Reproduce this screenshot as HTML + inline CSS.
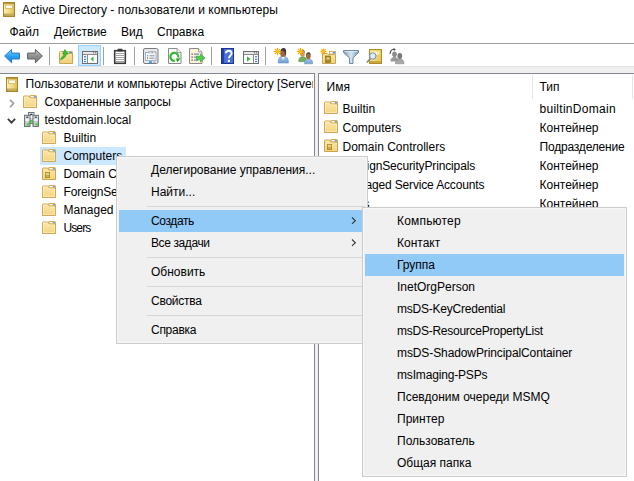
<!DOCTYPE html>
<html><head><meta charset="utf-8">
<style>
html,body{margin:0;padding:0;}
body{width:634px;height:481px;overflow:hidden;position:relative;background:#fff;font-family:"Liberation Sans",sans-serif;font-size:12px;color:#000;}
.a{position:absolute;}
.t{position:absolute;white-space:nowrap;line-height:13px;}
.vs{position:absolute;width:1px;height:18px;top:47px;background:#a0a0a0;}
svg{position:absolute;overflow:visible;}
</style></head><body>
<!-- title bar -->
<svg style="left:3px;top:2px" width="12" height="15" viewBox="0 0 12 15">
<defs><linearGradient id="bk" x1="0" x2="1"><stop offset="0" stop-color="#fdf2b8"/><stop offset="0.6" stop-color="#f0d77a"/><stop offset="1" stop-color="#ddb850"/></linearGradient></defs>
<rect x="0.5" y="0.5" width="11" height="14" fill="url(#bk)" stroke="#a8842a"/>
<rect x="1" y="1" width="10" height="1.2" fill="#c49a38"/>
<rect x="2.5" y="3" width="7" height="3.5" fill="#fffde8" stroke="#d4b460" stroke-width="0.8"/>
<rect x="1" y="11.6" width="10" height="2.6" fill="#b89c48"/><rect x="2" y="12.2" width="8" height="1.2" fill="#cdb868"/>
</svg>
<div class="t" style="left:22px;top:4px;font-size:12px;letter-spacing:0.06px">Active Directory - пользователи и компьютеры</div>
<!-- menu bar -->
<div class="t" style="left:9.5px;top:26px">Файл</div>
<div class="t" style="left:54px;top:26px">Действие</div>
<div class="t" style="left:121px;top:26px">Вид</div>
<div class="t" style="left:157px;top:26px">Справка</div>
<div class="a" style="left:0;top:43px;width:634px;height:1px;background:#a0a0a0"></div>
<!-- toolbar -->
<svg style="left:0;top:0" width="0" height="0"><defs>
<linearGradient id="gblue" x1="0" y1="0" x2="0" y2="1"><stop offset="0" stop-color="#8fd3ff"/><stop offset="0.5" stop-color="#2ba3f0"/><stop offset="1" stop-color="#1a7fd6"/></linearGradient>
<linearGradient id="ggray" x1="0" y1="0" x2="0" y2="1"><stop offset="0" stop-color="#c8c8c8"/><stop offset="0.5" stop-color="#909090"/><stop offset="1" stop-color="#7a7a7a"/></linearGradient>
<linearGradient id="gfold" x1="0" y1="0" x2="0" y2="1"><stop offset="0" stop-color="#fbe6a6"/><stop offset="1" stop-color="#f1cf7c"/></linearGradient>
<linearGradient id="gsteel" x1="0" y1="0" x2="1" y2="0"><stop offset="0" stop-color="#7b98b0"/><stop offset="0.5" stop-color="#d8e6f0"/><stop offset="1" stop-color="#7b98b0"/></linearGradient>
<linearGradient id="ggold" x1="0" y1="0" x2="1" y2="0"><stop offset="0" stop-color="#f6e49a"/><stop offset="1" stop-color="#e6c55c"/></linearGradient>
</defs></svg>
<!-- back -->
<svg style="left:4px;top:48px" width="16" height="16" viewBox="0 0 16 16"><path d="M0.6 8 L7.6 1.4 L7.6 5.1 L15.4 5.1 L15.4 11 L7.6 11 L7.6 14.8 Z" fill="url(#gblue)" stroke="#2a78c8" stroke-width="1" stroke-linejoin="round"/></svg>
<!-- fwd -->
<svg style="left:27px;top:48px" width="16" height="16" viewBox="0 0 16 16"><path d="M15.4 8 L8.4 1.4 L8.4 5.1 L0.6 5.1 L0.6 11 L8.4 11 L8.4 14.8 Z" fill="url(#ggray)" stroke="#5e5e5e" stroke-width="1" stroke-linejoin="round"/></svg>
<div class="vs" style="left:49px"></div>
<!-- folder up -->
<svg style="left:58px;top:48px" width="16" height="16" viewBox="0 0 16 16">
<path d="M1.5 4.5 Q1.5 3.5 2.5 3.5 H6 L7 5 H14.5 V15.5 H1.5 Z" fill="url(#gfold)" stroke="#c9a558"/>
<path d="M8.5 3.5 H14 Q14.5 3.5 14.5 4 V5.5 H9.5 Z" fill="#f6dc96" stroke="#c9a558" stroke-width="0.8"/><rect x="11.2" y="3.8" width="2.6" height="1.3" fill="#3b8ee8"/>
<path d="M2.5 11.8 C3.5 9 5.5 8.2 6.3 6 L4.6 6 L7 1.6 L10 6 L8.3 6 C7.8 8.8 5.8 10.5 2.5 11.8 Z" fill="#3dc43d" stroke="#1f9a1f" stroke-width="0.7" stroke-linejoin="round"/>
</svg>
<!-- show tree (checked) -->
<div class="a" style="left:78px;top:45px;width:21px;height:19px;background:#cce8ff;border:1px solid #99d1ff"></div>
<svg style="left:82px;top:48px" width="16" height="16" viewBox="0 0 16 16">
<rect x="0.5" y="3.5" width="15" height="12" fill="#fff" stroke="#6e6e6e"/>
<rect x="1" y="4" width="14" height="2" fill="#e8e8e8"/><line x1="1" y1="6.5" x2="15" y2="6.5" stroke="#8a8a8a"/>
<rect x="11" y="4.2" width="1.2" height="1.2" fill="#6e6e6e"/><rect x="13" y="4.2" width="1.2" height="1.2" fill="#6e6e6e"/>
<line x1="5.5" y1="7" x2="5.5" y2="15" stroke="#8a8a8a"/>
<rect x="2" y="8.2" width="2.2" height="1.2" fill="#3b7fd0"/><rect x="2" y="10.7" width="2.2" height="1.2" fill="#3b7fd0"/><rect x="2" y="13" width="2.2" height="1.2" fill="#3b7fd0"/>
<path d="M8.5 11 L11.5 8.5 V13.5 Z" fill="#3cb83c"/>
</svg>
<div class="vs" style="left:103px"></div>
<!-- clipboard -->
<svg style="left:112px;top:48px" width="16" height="16" viewBox="0 0 16 16">
<rect x="2.7" y="2.7" width="10.6" height="12.6" fill="#fff" stroke="#3a3a3a" stroke-width="1.6"/>
<rect x="5.5" y="0.8" width="5" height="2.6" rx="0.6" fill="#3a3a3a"/>
<line x1="4" y1="5.5" x2="12" y2="5.5" stroke="#a8a8a8"/><line x1="4" y1="7.5" x2="12" y2="7.5" stroke="#a8a8a8"/><line x1="4" y1="9.5" x2="12" y2="9.5" stroke="#a8a8a8"/><line x1="4" y1="11.5" x2="12" y2="11.5" stroke="#a8a8a8"/><line x1="4" y1="13.5" x2="12" y2="13.5" stroke="#a8a8a8"/>
</svg>
<div class="vs" style="left:134px"></div>
<!-- properties -->
<svg style="left:143px;top:48px" width="16" height="16" viewBox="0 0 16 16">
<rect x="0.5" y="0.5" width="14.5" height="15" rx="1.5" fill="#e6e8ec" stroke="#7a7a80"/>
<rect x="2.5" y="4.5" width="10.5" height="8" fill="#f6f8fb" stroke="#9aa0aa" stroke-width="0.8"/>
<rect x="6" y="3.5" width="3" height="1.5" fill="#f6f8fb" stroke="#9aa0aa" stroke-width="0.6"/><rect x="9.5" y="3.5" width="3" height="1.5" fill="#f6f8fb" stroke="#9aa0aa" stroke-width="0.6"/>
<rect x="4" y="7.2" width="1.2" height="1.2" fill="#2a9cf0"/><rect x="6.5" y="7.3" width="5" height="1" fill="#8a8a90"/>
<rect x="4" y="9.6" width="1.2" height="1.2" fill="#666"/><rect x="6.5" y="9.7" width="5" height="1" fill="#8a8a90"/>
<rect x="6" y="13.3" width="3" height="1.6" fill="#2a9cf0"/><rect x="10" y="13.3" width="2.5" height="1.6" fill="#bbb"/>
</svg>
<!-- refresh -->
<svg style="left:166px;top:48px" width="16" height="16" viewBox="0 0 16 16">
<path d="M2.5 0.5 H11 L15 4.5 V15.5 H2.5 Z" fill="#fbfbfb" stroke="#8a8a8a"/><path d="M11 0.5 V4.5 H15" fill="#eee" stroke="#8a8a8a" stroke-width="0.8"/>
<path d="M8.8 12.8 A4 4 0 1 1 12.3 9.5" fill="none" stroke="#36b836" stroke-width="2.2"/>
<path d="M10 10.5 L14.6 10.2 L11.2 14.2 Z" fill="#1f9e1f"/>
</svg>
<!-- export list -->
<svg style="left:189px;top:48px" width="16" height="16" viewBox="0 0 16 16">
<path d="M0.5 0.5 H9.5 L13 4 V15.5 H0.5 Z" fill="#fcf3d6" stroke="#8a8a8a"/><path d="M9.5 0.5 V4 H13" fill="#eee" stroke="#8a8a8a" stroke-width="0.8"/>
<rect x="2.5" y="5.5" width="1.2" height="1.2" fill="#333"/><rect x="5" y="5.6" width="5" height="1" fill="#5a6ab0"/>
<rect x="2.5" y="8.5" width="1.2" height="1.2" fill="#333"/><rect x="5" y="8.6" width="4" height="1" fill="#5a6ab0"/>
<rect x="2.5" y="11.5" width="1.2" height="1.2" fill="#333"/><rect x="5" y="11.6" width="4" height="1" fill="#5a6ab0"/>
<path d="M7.5 8.2 H11.5 V6 L16 10 L11.5 14 V11.8 H7.5 Z" fill="#4ccc4c" stroke="#2ca02c" stroke-width="0.6"/>
</svg>
<div class="vs" style="left:211px"></div>
<!-- help -->
<svg style="left:221px;top:48px" width="16" height="16" viewBox="0 0 16 16">
<rect x="0" y="0" width="13" height="16" fill="#4a70d8"/><rect x="0" y="0" width="3" height="16" fill="#2340a8"/><rect x="0.5" y="0.5" width="12" height="15" fill="none" stroke="#1d3590"/>
<path d="M5 5.2 C5 2.2 10.6 1.8 10.6 5.2 C10.6 7.6 7.9 7.8 7.9 10.3" fill="none" stroke="#fff" stroke-width="2"/><rect x="6.8" y="11.8" width="2.2" height="2.2" fill="#fff"/>
</svg>
<!-- action pane -->
<svg style="left:243px;top:48px" width="16" height="16" viewBox="0 0 16 16">
<rect x="0.5" y="3.5" width="15" height="12" fill="#fff" stroke="#6e6e6e"/>
<rect x="1" y="4" width="14" height="2" fill="#e8e8e8"/><line x1="1" y1="6.5" x2="15" y2="6.5" stroke="#8a8a8a"/>
<rect x="11" y="4.2" width="1.2" height="1.2" fill="#6e6e6e"/><rect x="13" y="4.2" width="1.2" height="1.2" fill="#6e6e6e"/>
<line x1="10.5" y1="7" x2="10.5" y2="15" stroke="#8a8a8a"/>
<rect x="12" y="8.2" width="2.2" height="1.2" fill="#3b7fd0"/><rect x="12" y="10.7" width="2.2" height="1.2" fill="#3b7fd0"/><rect x="12" y="13" width="2.2" height="1.2" fill="#3b7fd0"/>
<path d="M4 8.3 L7.5 11 L4 13.7 Z" fill="#3cb83c"/>
</svg>
<div class="vs" style="left:265px"></div>
<!-- new user -->
<svg style="left:274px;top:48px" width="16" height="16" viewBox="0 0 16 16">
<defs><linearGradient id="gbody" x1="0" y1="0" x2="0" y2="1"><stop offset="0" stop-color="#a9cbee"/><stop offset="1" stop-color="#6f9fd2"/></linearGradient></defs>
<path d="M4.2 15 C4 10.5 5.8 8 9.2 8 C12.6 8 14.6 10.5 14.4 15 Z" fill="url(#gbody)" stroke="#6a92c0" stroke-width="0.6"/>
<path d="M7.8 8.3 L9 12.5 L10.6 8.3 Z" fill="#fff"/>
<ellipse cx="9" cy="5.2" rx="2.8" ry="3.7" fill="#a0683a"/><path d="M6.3 4.2 C6.3 1.2 8 0 9.6 0 C11.6 0 12.5 1.8 12.1 5.5 C11.9 7 11.5 7.8 11 8.2 C11.2 6 10.9 3.6 9.5 3 C8.4 2.6 7.1 3 6.3 4.2 Z" fill="#3a3a3a"/>
<g stroke="#f6a800" stroke-width="1.2" stroke-linecap="round"><line x1="3.5" y1="0.3" x2="3.5" y2="6.7"/><line x1="0.3" y1="3.5" x2="6.7" y2="3.5"/><line x1="1.3" y1="1.3" x2="5.7" y2="5.7"/><line x1="5.7" y1="1.3" x2="1.3" y2="5.7"/></g>
<circle cx="3.5" cy="3.5" r="1.6" fill="#ffc020"/>
</svg>
<!-- new group -->
<svg style="left:297px;top:48px" width="16" height="16" viewBox="0 0 16 16">
<path d="M1.8 13.6 C1.6 10.5 3.2 8.8 5.8 8.8 C8.4 8.8 9.8 10.5 9.6 13.6 Z" fill="#72b05e" stroke="#4c8a3e" stroke-width="0.6"/>
<ellipse cx="5.6" cy="5.8" rx="2.2" ry="2.9" fill="#c8986a"/><path d="M3.6 5 C3.6 2.8 4.8 2 6 2 C7.6 2 8.2 3.3 7.9 6 C7.7 4.2 7 3.8 6 3.8 C5 3.8 4.2 4.2 3.6 5Z" fill="#8a6a40"/>
<path d="M7.6 15.8 C7.4 12.6 9 10.8 11.6 10.8 C14.2 10.8 15.8 12.6 15.6 15.8 Z" fill="url(#gbody)" stroke="#6a92c0" stroke-width="0.6"/>
<ellipse cx="11.3" cy="8.2" rx="2.3" ry="3" fill="#a0683a"/><path d="M9 7.5 C9 5 10.3 4.2 11.5 4.2 C13.2 4.2 13.9 5.6 13.6 8.5 C13.4 7 13 6 11.6 5.8 C10.7 5.7 9.6 6.4 9 7.5Z" fill="#3a3a3a"/>
<g stroke="#f6a800" stroke-width="1.2" stroke-linecap="round"><line x1="3.5" y1="0.3" x2="3.5" y2="6.7"/><line x1="0.3" y1="3.5" x2="6.7" y2="3.5"/><line x1="1.3" y1="1.3" x2="5.7" y2="5.7"/><line x1="5.7" y1="1.3" x2="1.3" y2="5.7"/></g>
<circle cx="3.5" cy="3.5" r="1.6" fill="#ffc020"/>
</svg>
<!-- new OU -->
<svg style="left:320px;top:48px" width="16" height="16" viewBox="0 0 16 16">
<path d="M2.5 5.5 H7.5 L8.5 6.5 H15.5 V15.5 H2.5 Z" fill="url(#gfold)" stroke="#c9a558"/>
<rect x="9.5" y="3.5" width="6" height="2.5" fill="#fff" stroke="#c9a558" stroke-width="0.8"/><rect x="12.8" y="4" width="2.2" height="1.4" fill="#3b8ee8"/>
<rect x="5.5" y="8" width="5" height="6.5" fill="#a08a20" stroke="#806810" stroke-width="0.6"/><rect x="6.5" y="9.5" width="3" height="2" fill="#e8d890"/>
<g stroke="#f4a400" stroke-width="1.2"><line x1="3.5" y1="0.5" x2="3.5" y2="6.5"/><line x1="0.5" y1="3.5" x2="6.5" y2="3.5"/><line x1="1.4" y1="1.4" x2="5.6" y2="5.6"/><line x1="5.6" y1="1.4" x2="1.4" y2="5.6"/></g><circle cx="3.5" cy="3.5" r="1.6" fill="#ffc020"/>
</svg>
<!-- filter -->
<svg style="left:343px;top:48px" width="16" height="16" viewBox="0 0 16 16">
<path d="M0.5 2.5 H15.5 V4.5 L10 10 V15.5 H6.5 V10 L0.5 4.5 Z" fill="url(#gsteel)" stroke="#5f7f98" stroke-width="0.9" stroke-linejoin="round"/>
<line x1="1.5" y1="3.5" x2="14.5" y2="3.5" stroke="#e8f0f8" stroke-width="0.8"/>
</svg>
<!-- find -->
<svg style="left:366px;top:48px" width="16" height="16" viewBox="0 0 16 16">
<rect x="3.5" y="1.5" width="12" height="14" fill="url(#ggold)" stroke="#b18d22"/>
<rect x="6" y="3.5" width="7.5" height="3" fill="#fff6c8"/>
<rect x="4" y="13" width="11" height="2" fill="#c8a840"/>
<line x1="4.5" y1="10.5" x2="0.8" y2="14.5" stroke="#8a8a8a" stroke-width="1.8"/>
<circle cx="6.8" cy="8" r="3.2" fill="#d8eef8" stroke="#7a8ea0" stroke-width="1"/>
</svg>
<!-- add to group -->
<svg style="left:389px;top:48px" width="16" height="16" viewBox="0 0 16 16">
<path d="M1 6 C1 2.5 3.5 1 5.5 1.2" fill="none" stroke="#505050" stroke-width="1.1"/><path d="M4.5 0 L7 1.4 L4.8 3 Z" fill="#505050"/>
<path d="M1.5 13.5 C1.2 10.5 3 9 5.5 9 C8 9 9.6 10.5 9.4 13.5 Z" fill="#9a9a9a"/>
<ellipse cx="5.5" cy="6.2" rx="2.3" ry="2.8" fill="#8c8c8c"/>
<path d="M6.5 15.8 C6.2 12.5 8 11 10.8 11 C13.6 11 15.2 12.5 15 15.8 Z" fill="#a8a8a8" stroke="#808080" stroke-width="0.5"/>
<ellipse cx="10.8" cy="8" rx="2.4" ry="3" fill="#7a7a7a"/>
</svg>

<!-- strip -->
<div class="a" style="left:0;top:66px;width:634px;height:1px;background:#e3e3e3"></div>
<div class="a" style="left:0;top:67px;width:634px;height:6px;background:#f0f0f0"></div>
<div class="a" style="left:0;top:73px;width:315px;height:1px;background:#828790"></div>
<div class="a" style="left:314px;top:73px;width:1px;height:408px;background:#828790"></div>
<div class="a" style="left:315px;top:67px;width:3px;height:414px;background:#f0f0f0"></div>
<div class="a" style="left:318px;top:73px;width:316px;height:1px;background:#828790"></div>
<div class="a" style="left:318px;top:73px;width:1px;height:408px;background:#828790"></div>
<svg style="left:0;top:0" width="0" height="0"><defs><linearGradient id="gfold2" x1="0" y1="0" x2="0" y2="1"><stop offset="0" stop-color="#fbe7a8"/><stop offset="1" stop-color="#f3d582"/></linearGradient></defs></svg>
<svg style="left:6px;top:77px" width="12" height="15" viewBox="0 0 12 15"><rect x="0.5" y="0.5" width="11" height="14" fill="url(#bk)" stroke="#a8842a"/><rect x="1" y="1" width="10" height="1.2" fill="#c49a38"/><rect x="2.5" y="3" width="7" height="3.5" fill="#fffde8" stroke="#d4b460" stroke-width="0.8"/><rect x="1" y="11.6" width="10" height="2.6" fill="#b89c48"/><rect x="2" y="12.2" width="8" height="1.2" fill="#cdb868"/></svg>
<div class="t" style="left:25.5px;top:78px;width:287px;overflow:hidden">Пользователи и компьютеры Active Directory [Server</div>
<svg style="left:9px;top:99px" width="6" height="9" viewBox="0 0 6 9"><path d="M1 0.8 L4.6 4.5 L1 8.2" fill="none" stroke="#a0a0a0" stroke-width="1.7"/></svg>
<svg style="left:23px;top:95px" width="14" height="13" viewBox="0 0 14 13"><path d="M6.5 3.2 V1.2 Q6.5 0.5 7.2 0.5 H12.8 Q13.5 0.5 13.5 1.2 V3.2 Z" fill="#f7df9c" stroke="#cda350" stroke-width="0.9"/><rect x="8" y="1.2" width="4.8" height="1.3" fill="#fff"/><rect x="10.8" y="1.2" width="2" height="1.3" fill="#3a8ae6"/><path d="M0.5 12.5 V1.9 Q0.5 1 1.4 1 H5.6 L7.2 3 H13.5 V12.5 Z" fill="url(#gfold2)" stroke="#cda350"/><path d="M1.4 11.6 V2 H5.3 L6.9 4 H12.6 V11.6 Z" fill="none" stroke="#fff1c4" stroke-width="0.7"/></svg>
<div class="t" style="left:44.5px;top:96px">Сохраненные запросы</div>
<svg style="left:7px;top:118px" width="9" height="6" viewBox="0 0 9 6"><path d="M0.9 0.9 L4.5 4.6 L8.1 0.9" fill="none" stroke="#3a3a3a" stroke-width="1.8"/></svg>
<svg style="left:24px;top:112px" width="15" height="15" viewBox="0 0 15 15">
<defs><linearGradient id="gsrv" x1="0" x2="1"><stop offset="0" stop-color="#a9afb6"/><stop offset="0.5" stop-color="#d9dde1"/><stop offset="1" stop-color="#9ea4ab"/></linearGradient></defs>
<g><rect x="4.5" y="0.5" width="5.5" height="11" fill="url(#gsrv)" stroke="#6c737b"/><rect x="5.2" y="1.2" width="4.2" height="2.3" fill="#eef1f4"/><ellipse cx="7.3" cy="2.3" rx="1.5" ry="0.6" fill="#10202c"/><rect x="5.2" y="4.4" width="4.2" height="1.5" fill="#fff"/><rect x="6" y="8" width="2.6" height="2.4" fill="#46d62e"/></g>
<g><rect x="0.5" y="3.3" width="5.5" height="11.2" fill="url(#gsrv)" stroke="#6c737b"/><rect x="1.2" y="4" width="4.2" height="2.3" fill="#eef1f4"/><ellipse cx="3.3" cy="5.1" rx="1.5" ry="0.6" fill="#10202c"/><rect x="1.2" y="7.2" width="4.2" height="1.6" fill="#fff"/><rect x="2.8" y="11.2" width="2.4" height="2.4" fill="#46d62e"/></g>
<g><rect x="9" y="3.3" width="5.5" height="11.2" fill="url(#gsrv)" stroke="#6c737b"/><rect x="9.7" y="4" width="4.2" height="2.3" fill="#eef1f4"/><ellipse cx="11.8" cy="5.1" rx="1.5" ry="0.6" fill="#10202c"/><rect x="9.7" y="7.2" width="4.2" height="1.6" fill="#fff"/><rect x="11.3" y="11.2" width="2.4" height="2.4" fill="#46d62e"/></g>
</svg>
<div class="t" style="left:44.5px;top:114px">testdomain.local</div>
<svg style="left:42px;top:131px" width="14" height="13" viewBox="0 0 14 13"><path d="M6.5 3.2 V1.2 Q6.5 0.5 7.2 0.5 H12.8 Q13.5 0.5 13.5 1.2 V3.2 Z" fill="#f7df9c" stroke="#cda350" stroke-width="0.9"/><rect x="8" y="1.2" width="4.8" height="1.3" fill="#fff"/><rect x="10.8" y="1.2" width="2" height="1.3" fill="#3a8ae6"/><path d="M0.5 12.5 V1.9 Q0.5 1 1.4 1 H5.6 L7.2 3 H13.5 V12.5 Z" fill="url(#gfold2)" stroke="#cda350"/><path d="M1.4 11.6 V2 H5.3 L6.9 4 H12.6 V11.6 Z" fill="none" stroke="#fff1c4" stroke-width="0.7"/></svg>
<div class="t" style="left:63.5px;top:132px">Builtin</div>
<div class="a" style="left:40px;top:147px;width:86px;height:18px;background:#cce8ff"></div>
<svg style="left:42px;top:149px" width="14" height="13" viewBox="0 0 14 13"><path d="M6.5 3.2 V1.2 Q6.5 0.5 7.2 0.5 H12.8 Q13.5 0.5 13.5 1.2 V3.2 Z" fill="#f7df9c" stroke="#cda350" stroke-width="0.9"/><rect x="8" y="1.2" width="4.8" height="1.3" fill="#fff"/><rect x="10.8" y="1.2" width="2" height="1.3" fill="#3a8ae6"/><path d="M0.5 12.5 V1.9 Q0.5 1 1.4 1 H5.6 L7.2 3 H13.5 V12.5 Z" fill="url(#gfold2)" stroke="#cda350"/><path d="M1.4 11.6 V2 H5.3 L6.9 4 H12.6 V11.6 Z" fill="none" stroke="#fff1c4" stroke-width="0.7"/></svg>
<div class="t" style="left:63.5px;top:150px">Computers</div>
<svg style="left:42px;top:167px" width="14" height="13" viewBox="0 0 14 13"><path d="M6.5 3.2 V1.2 Q6.5 0.5 7.2 0.5 H12.8 Q13.5 0.5 13.5 1.2 V3.2 Z" fill="#f7df9c" stroke="#cda350" stroke-width="0.9"/><rect x="8" y="1.2" width="4.8" height="1.3" fill="#fff"/><rect x="10.8" y="1.2" width="2" height="1.3" fill="#3a8ae6"/><path d="M0.5 12.5 V1.9 Q0.5 1 1.4 1 H5.6 L7.2 3 H13.5 V12.5 Z" fill="url(#gfold2)" stroke="#cda350"/><rect x="3" y="5" width="5" height="6" fill="#a38419"/><rect x="3.7" y="5.7" width="3.6" height="2.8" fill="#e4d088"/><rect x="3.7" y="9" width="3.6" height="1.4" fill="#c8b050"/></svg>
<div class="t" style="left:63.5px;top:168px">Domain Controllers</div>
<svg style="left:42px;top:185px" width="14" height="13" viewBox="0 0 14 13"><path d="M6.5 3.2 V1.2 Q6.5 0.5 7.2 0.5 H12.8 Q13.5 0.5 13.5 1.2 V3.2 Z" fill="#f7df9c" stroke="#cda350" stroke-width="0.9"/><rect x="8" y="1.2" width="4.8" height="1.3" fill="#fff"/><rect x="10.8" y="1.2" width="2" height="1.3" fill="#3a8ae6"/><path d="M0.5 12.5 V1.9 Q0.5 1 1.4 1 H5.6 L7.2 3 H13.5 V12.5 Z" fill="url(#gfold2)" stroke="#cda350"/><path d="M1.4 11.6 V2 H5.3 L6.9 4 H12.6 V11.6 Z" fill="none" stroke="#fff1c4" stroke-width="0.7"/></svg>
<div class="t" style="left:63.5px;top:186px;letter-spacing:-0.14px">ForeignSecurityPrincipals</div>
<svg style="left:42px;top:203px" width="14" height="13" viewBox="0 0 14 13"><path d="M6.5 3.2 V1.2 Q6.5 0.5 7.2 0.5 H12.8 Q13.5 0.5 13.5 1.2 V3.2 Z" fill="#f7df9c" stroke="#cda350" stroke-width="0.9"/><rect x="8" y="1.2" width="4.8" height="1.3" fill="#fff"/><rect x="10.8" y="1.2" width="2" height="1.3" fill="#3a8ae6"/><path d="M0.5 12.5 V1.9 Q0.5 1 1.4 1 H5.6 L7.2 3 H13.5 V12.5 Z" fill="url(#gfold2)" stroke="#cda350"/><path d="M1.4 11.6 V2 H5.3 L6.9 4 H12.6 V11.6 Z" fill="none" stroke="#fff1c4" stroke-width="0.7"/></svg>
<div class="t" style="left:63.5px;top:204px">Managed Service Accounts</div>
<svg style="left:42px;top:221px" width="14" height="13" viewBox="0 0 14 13"><path d="M6.5 3.2 V1.2 Q6.5 0.5 7.2 0.5 H12.8 Q13.5 0.5 13.5 1.2 V3.2 Z" fill="#f7df9c" stroke="#cda350" stroke-width="0.9"/><rect x="8" y="1.2" width="4.8" height="1.3" fill="#fff"/><rect x="10.8" y="1.2" width="2" height="1.3" fill="#3a8ae6"/><path d="M0.5 12.5 V1.9 Q0.5 1 1.4 1 H5.6 L7.2 3 H13.5 V12.5 Z" fill="url(#gfold2)" stroke="#cda350"/><path d="M1.4 11.6 V2 H5.3 L6.9 4 H12.6 V11.6 Z" fill="none" stroke="#fff1c4" stroke-width="0.7"/></svg>
<div class="t" style="left:63.5px;top:222px;letter-spacing:-0.9px">Users</div>
<div class="t" style="left:326.5px;top:81px">Имя</div>
<div class="t" style="left:539.5px;top:81px">Тип</div>
<div class="a" style="left:532px;top:75px;width:1px;height:24px;background:#e5e5e5"></div>
<div class="a" style="left:632px;top:75px;width:1px;height:24px;background:#e5e5e5"></div>
<svg style="left:324px;top:101px" width="14" height="13" viewBox="0 0 14 13"><path d="M6.5 3.2 V1.2 Q6.5 0.5 7.2 0.5 H12.8 Q13.5 0.5 13.5 1.2 V3.2 Z" fill="#f7df9c" stroke="#cda350" stroke-width="0.9"/><rect x="8" y="1.2" width="4.8" height="1.3" fill="#fff"/><rect x="10.8" y="1.2" width="2" height="1.3" fill="#3a8ae6"/><path d="M0.5 12.5 V1.9 Q0.5 1 1.4 1 H5.6 L7.2 3 H13.5 V12.5 Z" fill="url(#gfold2)" stroke="#cda350"/><path d="M1.4 11.6 V2 H5.3 L6.9 4 H12.6 V11.6 Z" fill="none" stroke="#fff1c4" stroke-width="0.7"/></svg>
<div class="t" style="left:342.5px;top:103px">Builtin</div>
<div class="t" style="left:539.5px;top:103px;letter-spacing:0.28px">builtinDomain</div>
<svg style="left:324px;top:120px" width="14" height="13" viewBox="0 0 14 13"><path d="M6.5 3.2 V1.2 Q6.5 0.5 7.2 0.5 H12.8 Q13.5 0.5 13.5 1.2 V3.2 Z" fill="#f7df9c" stroke="#cda350" stroke-width="0.9"/><rect x="8" y="1.2" width="4.8" height="1.3" fill="#fff"/><rect x="10.8" y="1.2" width="2" height="1.3" fill="#3a8ae6"/><path d="M0.5 12.5 V1.9 Q0.5 1 1.4 1 H5.6 L7.2 3 H13.5 V12.5 Z" fill="url(#gfold2)" stroke="#cda350"/><path d="M1.4 11.6 V2 H5.3 L6.9 4 H12.6 V11.6 Z" fill="none" stroke="#fff1c4" stroke-width="0.7"/></svg>
<div class="t" style="left:342.5px;top:122px">Computers</div>
<div class="t" style="left:539.5px;top:122px">Контейнер</div>
<svg style="left:324px;top:139px" width="14" height="13" viewBox="0 0 14 13"><path d="M6.5 3.2 V1.2 Q6.5 0.5 7.2 0.5 H12.8 Q13.5 0.5 13.5 1.2 V3.2 Z" fill="#f7df9c" stroke="#cda350" stroke-width="0.9"/><rect x="8" y="1.2" width="4.8" height="1.3" fill="#fff"/><rect x="10.8" y="1.2" width="2" height="1.3" fill="#3a8ae6"/><path d="M0.5 12.5 V1.9 Q0.5 1 1.4 1 H5.6 L7.2 3 H13.5 V12.5 Z" fill="url(#gfold2)" stroke="#cda350"/><rect x="3" y="5" width="5" height="6" fill="#a38419"/><rect x="3.7" y="5.7" width="3.6" height="2.8" fill="#e4d088"/><rect x="3.7" y="9" width="3.6" height="1.4" fill="#c8b050"/></svg>
<div class="t" style="left:342.5px;top:141px">Domain Controllers</div>
<div class="t" style="left:539.5px;top:141px;letter-spacing:-0.19px">Подразделение</div>
<svg style="left:324px;top:158px" width="14" height="13" viewBox="0 0 14 13"><path d="M6.5 3.2 V1.2 Q6.5 0.5 7.2 0.5 H12.8 Q13.5 0.5 13.5 1.2 V3.2 Z" fill="#f7df9c" stroke="#cda350" stroke-width="0.9"/><rect x="8" y="1.2" width="4.8" height="1.3" fill="#fff"/><rect x="10.8" y="1.2" width="2" height="1.3" fill="#3a8ae6"/><path d="M0.5 12.5 V1.9 Q0.5 1 1.4 1 H5.6 L7.2 3 H13.5 V12.5 Z" fill="url(#gfold2)" stroke="#cda350"/><path d="M1.4 11.6 V2 H5.3 L6.9 4 H12.6 V11.6 Z" fill="none" stroke="#fff1c4" stroke-width="0.7"/></svg>
<div class="t" style="left:342.5px;top:160px;letter-spacing:-0.14px">ForeignSecurityPrincipals</div>
<div class="t" style="left:539.5px;top:160px">Контейнер</div>
<svg style="left:324px;top:177px" width="14" height="13" viewBox="0 0 14 13"><path d="M6.5 3.2 V1.2 Q6.5 0.5 7.2 0.5 H12.8 Q13.5 0.5 13.5 1.2 V3.2 Z" fill="#f7df9c" stroke="#cda350" stroke-width="0.9"/><rect x="8" y="1.2" width="4.8" height="1.3" fill="#fff"/><rect x="10.8" y="1.2" width="2" height="1.3" fill="#3a8ae6"/><path d="M0.5 12.5 V1.9 Q0.5 1 1.4 1 H5.6 L7.2 3 H13.5 V12.5 Z" fill="url(#gfold2)" stroke="#cda350"/><path d="M1.4 11.6 V2 H5.3 L6.9 4 H12.6 V11.6 Z" fill="none" stroke="#fff1c4" stroke-width="0.7"/></svg>
<div class="t" style="left:342.5px;top:179px;letter-spacing:-0.15px">Managed Service Accounts</div>
<div class="t" style="left:539.5px;top:179px">Контейнер</div>
<svg style="left:324px;top:196px" width="14" height="13" viewBox="0 0 14 13"><path d="M6.5 3.2 V1.2 Q6.5 0.5 7.2 0.5 H12.8 Q13.5 0.5 13.5 1.2 V3.2 Z" fill="#f7df9c" stroke="#cda350" stroke-width="0.9"/><rect x="8" y="1.2" width="4.8" height="1.3" fill="#fff"/><rect x="10.8" y="1.2" width="2" height="1.3" fill="#3a8ae6"/><path d="M0.5 12.5 V1.9 Q0.5 1 1.4 1 H5.6 L7.2 3 H13.5 V12.5 Z" fill="url(#gfold2)" stroke="#cda350"/><path d="M1.4 11.6 V2 H5.3 L6.9 4 H12.6 V11.6 Z" fill="none" stroke="#fff1c4" stroke-width="0.7"/></svg>
<div class="t" style="left:342.5px;top:198px;letter-spacing:-0.9px;letter-spacing:-1.1px">Users</div>
<div class="t" style="left:539.5px;top:198px">Контейнер</div>
<div class="a" style="left:116px;top:156px;width:250px;height:186px;background:#f0f0f0;border:1px solid #cbcbcb;box-shadow:inset 0 0 0 1px #f7f7f7"></div>
<div class="t" style="left:151px;top:164px">Делегирование управления...</div>
<div class="t" style="left:151px;top:186px">Найти...</div>
<div class="a" style="left:119px;top:210px;width:246px;height:22px;background:#91c9f7"></div>
<div class="t" style="left:151px;top:215px;letter-spacing:-0.38px">Создать</div>
<svg style="left:351px;top:217px" width="6" height="8" viewBox="0 0 6 8"><path d="M1 0.5 L4.3 3.7 L1 6.9" fill="none" stroke="#333" stroke-width="1.1"/></svg>
<div class="t" style="left:151px;top:237px;letter-spacing:-0.4px">Все задачи</div>
<svg style="left:351px;top:239px" width="6" height="8" viewBox="0 0 6 8"><path d="M1 0.5 L4.3 3.7 L1 6.9" fill="none" stroke="#333" stroke-width="1.1"/></svg>
<div class="t" style="left:151px;top:266px">Обновить</div>
<div class="t" style="left:151px;top:295px;letter-spacing:-0.25px">Свойства</div>
<div class="t" style="left:151px;top:324px;letter-spacing:-0.28px">Справка</div>
<div class="a" style="left:147px;top:206px;width:218px;height:1px;background:#d7d7d7"></div>
<div class="a" style="left:147px;top:257px;width:218px;height:1px;background:#d7d7d7"></div>
<div class="a" style="left:147px;top:286px;width:218px;height:1px;background:#d7d7d7"></div>
<div class="a" style="left:147px;top:315px;width:218px;height:1px;background:#d7d7d7"></div>
<div class="a" style="left:362px;top:207px;width:263px;height:268px;background:#f0f0f0;border:1px solid #cbcbcb;box-shadow:inset 0 0 0 1px #f7f7f7"></div>
<div class="t" style="left:397px;top:215px;letter-spacing:0.19px">Компьютер</div>
<div class="t" style="left:397px;top:237px">Контакт</div>
<div class="a" style="left:365px;top:254px;width:259px;height:22px;background:#91c9f7"></div>
<div class="t" style="left:397px;top:259px">Группа</div>
<div class="t" style="left:397px;top:281px">InetOrgPerson</div>
<div class="t" style="left:397px;top:303px;letter-spacing:-0.22px">msDS-KeyCredential</div>
<div class="t" style="left:397px;top:325px;letter-spacing:-0.25px">msDS-ResourcePropertyList</div>
<div class="t" style="left:397px;top:347px;letter-spacing:-0.1px">msDS-ShadowPrincipalContainer</div>
<div class="t" style="left:397px;top:369px;letter-spacing:-0.17px">msImaging-PSPs</div>
<div class="t" style="left:397px;top:391px">Псевдоним очереди MSMQ</div>
<div class="t" style="left:397px;top:413px">Принтер</div>
<div class="t" style="left:397px;top:435px">Пользователь</div>
<div class="t" style="left:397px;top:457px">Общая папка</div>
</body></html>
